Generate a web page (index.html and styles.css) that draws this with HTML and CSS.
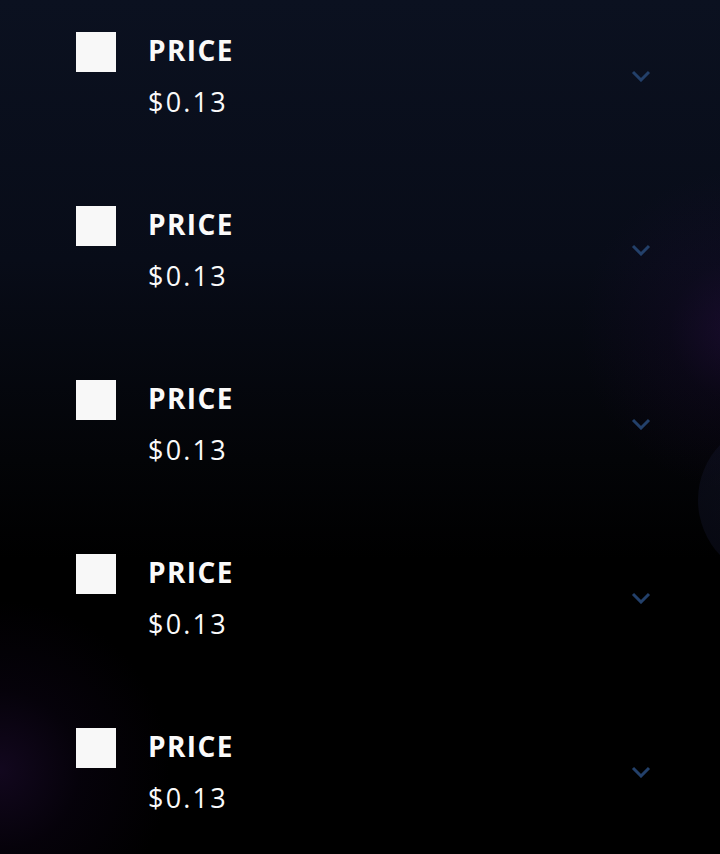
FILE: index.html
```html
<!DOCTYPE html>
<html lang="en">
<head>
  <meta charset="UTF-8">
  <meta name="viewport" content="width=device-width, initial-scale=1.0">
  <title>Price list</title>
  <link rel="stylesheet" href="styles.css">
</head>
<body>
  <div class="space">
    <div class="planet"></div>
    <ul class="price-list">
      <li class="price-row">
        <span class="box"></span>
        <div class="info">
          <div class="label">PRICE</div>
          <div class="value">$0.13</div>
        </div>
        <svg class="chevron" width="20" height="12" viewBox="0 0 20 12"><path d="M2 2 L10 10 L18 2" fill="none" stroke="#23406a" stroke-width="3"/></svg>
      </li>
      <li class="price-row">
        <span class="box"></span>
        <div class="info">
          <div class="label">PRICE</div>
          <div class="value">$0.13</div>
        </div>
        <svg class="chevron" width="20" height="12" viewBox="0 0 20 12"><path d="M2 2 L10 10 L18 2" fill="none" stroke="#23406a" stroke-width="3"/></svg>
      </li>
      <li class="price-row">
        <span class="box"></span>
        <div class="info">
          <div class="label">PRICE</div>
          <div class="value">$0.13</div>
        </div>
        <svg class="chevron" width="20" height="12" viewBox="0 0 20 12"><path d="M2 2 L10 10 L18 2" fill="none" stroke="#23406a" stroke-width="3"/></svg>
      </li>
      <li class="price-row">
        <span class="box"></span>
        <div class="info">
          <div class="label">PRICE</div>
          <div class="value">$0.13</div>
        </div>
        <svg class="chevron" width="20" height="12" viewBox="0 0 20 12"><path d="M2 2 L10 10 L18 2" fill="none" stroke="#23406a" stroke-width="3"/></svg>
      </li>
      <li class="price-row">
        <span class="box"></span>
        <div class="info">
          <div class="label">PRICE</div>
          <div class="value">$0.13</div>
        </div>
        <svg class="chevron" width="20" height="12" viewBox="0 0 20 12"><path d="M2 2 L10 10 L18 2" fill="none" stroke="#23406a" stroke-width="3"/></svg>
      </li>
    </ul>
  </div>
</body>
</html>
```
FILE: styles.css
```css
body {
  margin: 0;
  font-family: 'Open Sans', 'DejaVu Sans', sans-serif;
  color: #fafafa;
  background: #000;
}

.space {
  position: relative;
  min-height: 854px;
  overflow: hidden;
  background:
    radial-gradient(circle at 740px 330px, rgba(50, 15, 80, 0.4) 0, rgba(35, 10, 60, 0.18) 70px, rgba(0, 0, 0, 0) 160px),
    radial-gradient(circle at 0 770px, rgba(45, 18, 75, 0.4) 0, rgba(30, 10, 55, 0.18) 80px, rgba(0, 0, 0, 0) 170px),
    linear-gradient(to bottom, #0b1120 0, #080c18 260px, #030407 460px, #000 560px);
}

.planet {
  position: absolute;
  left: 698px;
  top: 420px;
  width: 160px;
  height: 160px;
  border-radius: 50%;
  background: radial-gradient(circle at 35% 50%, rgba(30, 34, 64, 0.3), rgba(10, 12, 30, 0.5));
}

.price-list {
  position: relative;
  list-style: none;
  margin: 0;
  padding: 0 0 0 76px;
}

.price-row {
  display: flex;
  align-items: flex-start;
  height: 174px;
  padding-top: 32px;
  box-sizing: border-box;
}

.box {
  width: 40px;
  height: 40px;
  background: #f8f8f8;
  flex-shrink: 0;
}

.info {
  margin-left: 32px;
  flex: 1;
}

.label {
  font-size: 28px;
  font-weight: 700;
  line-height: 36px;
  letter-spacing: 1.4px;
}

.value {
  font-size: 27px;
  font-weight: 400;
  line-height: 34px;
  margin-top: 17px;
  letter-spacing: 2.2px;
}

.chevron {
  margin: 38px 69px 0 0;
}
```
